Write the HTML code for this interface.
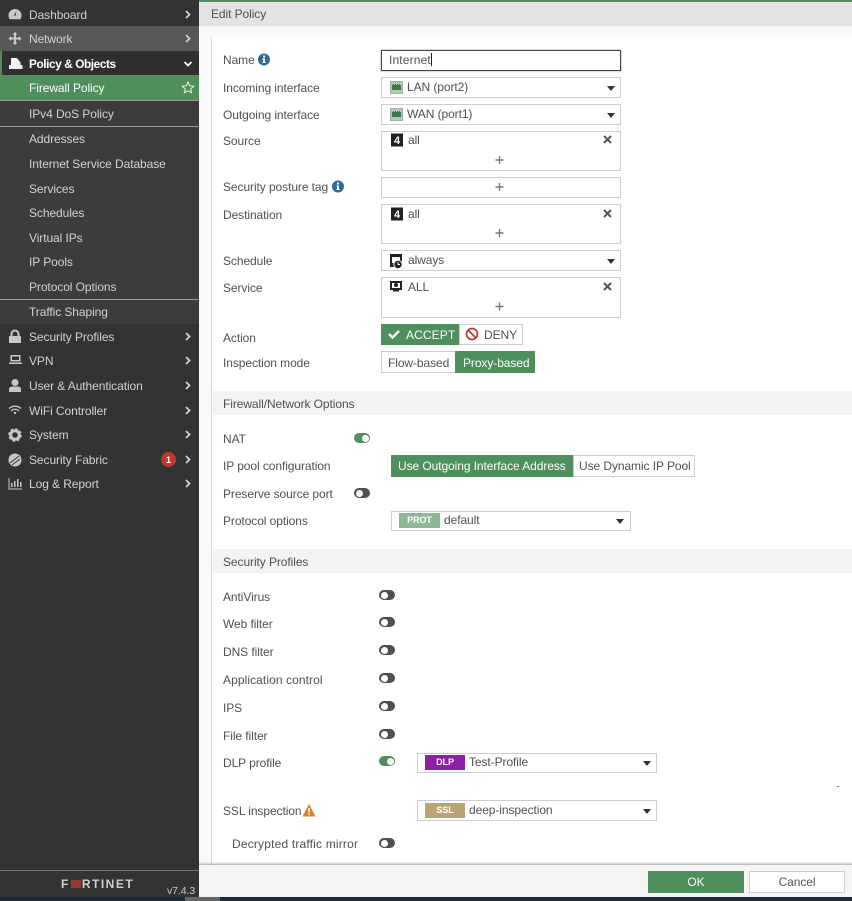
<!DOCTYPE html>
<html><head><meta charset="utf-8"><style>
html,body{margin:0;padding:0;width:852px;height:901px;overflow:hidden;background:#fff;font-family:"Liberation Sans",sans-serif;font-size:12px;letter-spacing:-.08px;color:#505050}
.a,.t,.b,svg{position:absolute}
svg{z-index:2}
.t{line-height:16px;white-space:nowrap;z-index:3}
.s{color:#d2d2d2;left:29px}
.l{left:223px;color:#505050}
.b{box-sizing:border-box;border:1px solid #cdcdcd;background:#fff}
.sec{position:absolute;left:212px;width:640px;height:24px;background:#f3f3f3}
.tg{position:absolute;width:16px;height:10px;border-radius:5px;background:#505050}
.tg:after{content:"";position:absolute;left:1.500px;top:1.500px;width:7px;height:7px;background:#fff;border-radius:50%}
.tg.on{background:#4e8f5b}.tg.on:after{left:7.500px}
.ar{position:absolute;width:0;height:0;border-left:4.500px solid transparent;border-right:4.500px solid transparent;border-top:5px solid #333;z-index:3}
.chip{position:absolute;width:40px;height:15px;color:#fff;font-size:9px;font-weight:bold;text-align:center;line-height:15px;z-index:3}
</style></head><body>
<div class="a" style="left:0;top:0;width:199px;height:901px;background:#333"></div>
<div class="a" style="left:0;top:26px;width:199px;height:25px;background:#575757"></div>
<div class="a" style="left:0;top:51px;width:2px;height:24px;background:#4e8f5b"></div>
<div class="a" style="left:2px;top:51px;width:197px;height:24px;background:#2f2f2f"></div>
<div class="a" style="left:0;top:75px;width:199px;height:25px;background:#4e8f5b"></div>
<div class="a" style="left:0;top:100px;width:199px;height:224px;background:#3c3c3c"></div>
<div class="a" style="left:0;top:100px;width:199px;height:1px;background:#9a9a9a"></div>
<div class="a" style="left:0;top:126px;width:199px;height:1px;background:#9a9a9a"></div>
<div class="a" style="left:0;top:299px;width:199px;height:1px;background:#9a9a9a"></div>
<div class="a" style="left:0;top:870px;width:199px;height:1px;background:#777"></div>
<div class="t s" style="top:7px">Dashboard</div>
<div class="t s" style="top:31px">Network</div>
<div class="t s" style="top:56px;color:#fff;font-weight:bold;font-size:11.800px;letter-spacing:-.4px">Policy &amp; Objects</div>
<div class="t s" style="top:80px;color:#fff">Firewall Policy</div>
<div class="t s" style="top:106px">IPv4 DoS Policy</div>
<div class="t s" style="top:131px">Addresses</div>
<div class="t s" style="top:156px">Internet Service Database</div>
<div class="t s" style="top:181px">Services</div>
<div class="t s" style="top:205px">Schedules</div>
<div class="t s" style="top:230px">Virtual IPs</div>
<div class="t s" style="top:254px">IP Pools</div>
<div class="t s" style="top:279px">Protocol Options</div>
<div class="t s" style="top:304px">Traffic Shaping</div>
<div class="t s" style="top:329px">Security Profiles</div>
<div class="t s" style="top:353px">VPN</div>
<div class="t s" style="top:378px">User &amp; Authentication</div>
<div class="t s" style="top:403px">WiFi Controller</div>
<div class="t s" style="top:427px">System</div>
<div class="t s" style="top:452px">Security Fabric</div>
<div class="t s" style="top:476px">Log &amp; Report</div>
<svg style="left:0;top:0" width="199" height="500" fill="#c8c8c8">
<g fill="none" stroke="#d0d0d0" stroke-width="1.800">
<path d="M186 11l3.500 3.500-3.500 3.500M186 35l3.500 3.500-3.500 3.500M186 333l3.500 3.500-3.500 3.500M186 357l3.500 3.500-3.500 3.500M186 382l3.500 3.500-3.500 3.500M186 407l3.500 3.500-3.500 3.500M186 431l3.500 3.500-3.500 3.500M186 456l3.500 3.500-3.500 3.500M186 480l3.500 3.500-3.500 3.500"/>
<path d="M184.500 62l3.500 3.500 3.500-3.500" stroke="#fff"/>
</g>
<path d="M188 82l1.700 3.800 4.100.4-3.100 2.700.9 4-3.600-2.100-3.600 2.100.9-4-3.100-2.700 4.100-.4z" fill="none" stroke="#e8f3ea" stroke-width="1"/>
<path d="M15 9a6.500 6.500 0 0 0-6.500 6.500c0 1.500.5 2.800 1.300 3.700h10.400c.8-.9 1.300-2.200 1.300-3.700A6.500 6.500 0 0 0 15 9z"/><path d="M16.500 11l-1 5-1.500-.5z" fill="#333"/>
<path d="M15 32l2.500 2.500h-1.500v3h3V36l2.500 2.500-2.500 2.500v-1.500h-3v3h1.500L15 45l-2.500-2.500H14v-3h-3V41l-2.500-2.500L11 36v1.500h3v-3h-1.500z"/>
<path d="M11 58h6l3.500 4.500V65H11zM9 65h13.500v4H9z" fill="#f2f2f2"/>
<path d="M10.500 336v-2a4.500 4.500 0 0 1 9 0v2h1.500v7H9v-7zM12.500 336h5v-2a2.500 2.500 0 0 0-5 0z"/>
<path d="M10.500 355h10v6.500h-10zM12 356.500v3.500h7v-3.500zM9 362.500h13v1.500H9z"/>
<circle cx="15" cy="382.500" r="3.500"/><path d="M9 392v-2.500q0-3 3-3h6q3 0 3 3V392z"/>
<path d="M9 408.500a9 9 0 0 1 12 0M11 411a5.500 5.500 0 0 1 8 0" fill="none" stroke="#c8c8c8" stroke-width="1.300"/><circle cx="15" cy="413" r="1.200"/>
<circle cx="15" cy="435" r="4.300" fill="none" stroke="#c8c8c8" stroke-width="3"/><circle cx="15" cy="435" r="5.600" fill="none" stroke="#c8c8c8" stroke-width="2.400" stroke-dasharray="2.400 2"/>
<circle cx="15" cy="460" r="6.500"/><path d="M10 463l9-7M12 465l8-6" stroke="#333" fill="none"/>
<path d="M9 478v11h13" fill="none" stroke="#c8c8c8" stroke-width="1"/><path d="M11 483h1.500v4H11zM14 481h1.500v6H14zM17 479h1.500v8H17zM20 482h1.500v5H20z"/>
<circle cx="168.500" cy="459.500" r="7.500" fill="#c0392b"/>
</svg>
<div class="t" style="left:165px;top:452px;width:7px;text-align:center;color:#fff;font-size:9px;font-weight:bold">1</div>
<div class="t" style="left:61px;top:876px;color:#cfcfcf;font-size:12px;font-weight:bold;letter-spacing:1.500px">F<span style="display:inline-block;width:10px;height:8px;background:#9b3a32;margin:0 1px"></span>RTINET</div>
<div class="t" style="left:167px;top:883px;color:#ccc;font-size:10.500px">v7.4.3</div>

<div class="a" style="left:199px;top:0;width:653px;height:2px;background:#4e8f5b"></div>
<div class="a" style="left:199px;top:2px;width:653px;height:24px;background:#e3e3e3"></div>
<div class="a" style="left:199px;top:26px;width:653px;height:839px;background:#f9f9f9"></div>
<div class="a" style="left:211px;top:37px;width:641px;height:828px;background:#fff;border-left:1px solid #dcdcdc;box-sizing:border-box"></div>
<div class="t" style="left:211px;top:6px">Edit Policy</div>

<div class="t l" style="top:52px">Name</div>
<div class="t l" style="top:80px">Incoming interface</div>
<div class="t l" style="top:107px">Outgoing interface</div>
<div class="t l" style="top:133px">Source</div>
<div class="t l" style="top:179px">Security posture tag</div>
<div class="t l" style="top:207px">Destination</div>
<div class="t l" style="top:253px">Schedule</div>
<div class="t l" style="top:280px">Service</div>
<div class="t l" style="top:330px">Action</div>
<div class="t l" style="top:355px">Inspection mode</div>

<div class="b" style="left:381px;top:50px;width:240px;height:21px;border-color:#444;box-shadow:0 0 2px #999"></div>
<div class="t" style="left:389px;top:52px;letter-spacing:.15px">Internet</div>
<div class="a" style="left:431px;top:53px;width:1px;height:13px;background:#222;z-index:3"></div>
<div class="b" style="left:381px;top:77px;width:240px;height:21px"></div>
<div class="b" style="left:381px;top:104px;width:240px;height:21px"></div>
<div class="b" style="left:381px;top:131px;width:240px;height:40px"></div>
<div class="b" style="left:381px;top:177px;width:240px;height:21px"></div>
<div class="b" style="left:381px;top:204px;width:240px;height:40px"></div>
<div class="b" style="left:381px;top:250px;width:240px;height:21px"></div>
<div class="b" style="left:381px;top:277px;width:240px;height:41px"></div>
<div class="t" style="left:407px;top:79px">LAN (port2)</div>
<div class="t" style="left:407px;top:106px">WAN (port1)</div>
<div class="t" style="left:408px;top:132px">all</div>
<div class="t" style="left:408px;top:206px">all</div>
<div class="t" style="left:408px;top:252px">always</div>
<div class="t" style="left:408px;top:279px">ALL</div>
<div class="ar" style="left:607px;top:86px"></div>
<div class="ar" style="left:607px;top:113px"></div>
<div class="ar" style="left:607px;top:259px"></div>
<svg style="left:200px;top:40px" width="652" height="340">
<g fill="#2f6a9e"><circle cx="64" cy="19.500" r="6"/><circle cx="138" cy="146.500" r="6"/></g>
<g fill="#fff"><path d="M63 15.500h2v2h-2zM62.500 18.500h2.500v3.500h.8v1h-3.500v-1h.7v-2.500h-.5zM137 142.500h2v2h-2zM136.500 145.500h2.500v3.500h.8v1h-3.500v-1h.7v-2.500h-.5z"/></g>
<g fill="#a8d0ae" stroke="#aaa"><rect x="190.500" y="41.500" width="12" height="12"/><rect x="190.500" y="68.500" width="12" height="12"/></g>
<g fill="#3d7a48"><path d="M192 45h1v-1h1v1h1v-1h1v1h1v-1h1v1h1v-1h1v1h1v5h-9zM192 72h1v-1h1v1h1v-1h1v1h1v-1h1v1h1v-1h1v1h1v5h-9z"/></g>
<g fill="#222"><rect x="191" y="93.500" width="12" height="13"/><rect x="191" y="167.500" width="12" height="13"/><path d="M190 214h12v13h-12zM190 241h12v9h-12z"/></g>
<g fill="#fff" font-family="Liberation Sans" font-weight="bold" font-size="11" text-anchor="middle"><text x="197" y="104">4</text><text x="197" y="178">4</text></g>
<rect x="192" y="217" width="8" height="6" fill="#fff"/><circle cx="198" cy="224.500" r="4.200" fill="#222" stroke="#fff"/><path d="M198 222v2.500h2" stroke="#fff" fill="none"/>
<rect x="192" y="243" width="8" height="5" fill="#fff"/><circle cx="196" cy="245" r="2" fill="#222"/>
<path d="M193 250.500h6" stroke="#222" stroke-width="2"/>
<g stroke="#555" stroke-width="2" fill="none">
<path d="M404 96l7 7M411 96l-7 7M404 170l7 7M411 170l-7 7M404 243l7 7M411 243l-7 7"/>
</g>
<g stroke="#777" stroke-width="1.400" fill="none">
<path d="M299.500 116v8M295.500 120h8M299.500 143v8M295.500 147h8M299.500 189v8M295.500 193h8M299.500 262.500v8M295.500 266.500h8"/>
</g>
<path d="M189 294l3.500 3.500 6.500-6.500" stroke="#fff" stroke-width="2.400" fill="none"/>
<circle cx="272" cy="294" r="5.500" fill="none" stroke="#c0392b" stroke-width="1.700"/><path d="M268 290l8 8" stroke="#c0392b" stroke-width="1.700"/>
</svg>
<div class="a" style="left:381px;top:324px;width:78px;height:21px;background:#4e8f5b"></div>
<div class="b" style="left:459px;top:324px;width:64px;height:21px"></div>
<div class="t" style="left:406px;top:327px;color:#fff;letter-spacing:.1px">ACCEPT</div>
<div class="t" style="left:484px;top:327px">DENY</div>
<div class="b" style="left:381px;top:351px;width:76px;height:22px"></div>
<div class="a" style="left:455px;top:351px;width:80px;height:22px;background:#4e8f5b"></div>
<div class="t" style="left:388px;top:355px">Flow-based</div>
<div class="t" style="left:463px;top:355px;color:#fff">Proxy-based</div>

<div class="sec" style="top:391px"></div>
<div class="t l" style="top:396px">Firewall/Network Options</div>
<div class="t l" style="top:431px">NAT</div>
<div class="t l" style="top:458px">IP pool configuration</div>
<div class="t l" style="top:486px">Preserve source port</div>
<div class="t l" style="top:513px">Protocol options</div>
<div class="tg on" style="left:354px;top:433px"></div>
<div class="tg" style="left:354px;top:488px"></div>
<div class="a" style="left:391px;top:455px;width:182px;height:22px;background:#4e8f5b"></div>
<div class="b" style="left:573px;top:455px;width:122px;height:22px"></div>
<div class="t" style="left:398px;top:458px;color:#fff">Use Outgoing Interface Address</div>
<div class="t" style="left:579px;top:458px">Use Dynamic IP Pool</div>
<div class="b" style="left:391px;top:511px;width:240px;height:20px"></div>
<div class="chip" style="left:399px;top:513px;width:41px;background:#8db894">PROT</div>
<div class="t" style="left:444px;top:512px">default</div>
<div class="ar" style="left:616px;top:519px"></div>

<div class="sec" style="top:549px"></div>
<div class="t l" style="top:554px">Security Profiles</div>
<div class="t l" style="top:589px">AntiVirus</div>
<div class="t l" style="top:616px">Web filter</div>
<div class="t l" style="top:644px">DNS filter</div>
<div class="t l" style="top:672px;letter-spacing:.08px">Application control</div>
<div class="t l" style="top:700px">IPS</div>
<div class="t l" style="top:728px">File filter</div>
<div class="t l" style="top:755px">DLP profile</div>
<div class="t l" style="top:803px">SSL inspection</div>
<div class="t l" style="left:232px;top:836px;letter-spacing:.18px">Decrypted traffic mirror</div>
<div class="tg" style="left:379px;top:590px"></div>
<div class="tg" style="left:379px;top:617px"></div>
<div class="tg" style="left:379px;top:645px"></div>
<div class="tg" style="left:379px;top:673px"></div>
<div class="tg" style="left:379px;top:701px"></div>
<div class="tg" style="left:379px;top:729px"></div>
<div class="tg on" style="left:379px;top:756px"></div>
<div class="tg" style="left:379px;top:838px"></div>
<div class="b" style="left:417px;top:753px;width:240px;height:20px"></div>
<div class="chip" style="left:425px;top:755px;background:#8f1fa8">DLP</div>
<div class="t" style="left:469px;top:754px">Test-Profile</div>
<div class="ar" style="left:643px;top:761px"></div>
<div class="a" style="left:837px;top:786px;width:2px;height:1px;background:#777"></div>
<div class="b" style="left:417px;top:800px;width:240px;height:21px"></div>
<div class="chip" style="left:425px;top:803px;background:#bda374">SSL</div>
<div class="t" style="left:469px;top:802px">deep-inspection</div>
<div class="ar" style="left:643px;top:809px"></div>
<svg style="left:302px;top:804px" width="14" height="13"><path d="M7 0l6.500 12.500H.5z" fill="#d9822b"/><path d="M6.300 4h1.400v4.500H6.300zM6.300 9.500h1.400V11H6.300z" fill="#fff"/></svg>

<div class="a" style="left:199px;top:862px;width:653px;height:3px;background:linear-gradient(rgba(180,180,180,0),rgba(170,170,170,.9))"></div>
<div class="a" style="left:199px;top:865px;width:653px;height:32px;background:#f5f5f5"></div>
<div class="a" style="left:648px;top:871px;width:96px;height:22px;background:#4e8f5b"></div>
<div class="b" style="left:749px;top:871px;width:96px;height:22px"></div>
<div class="t" style="left:648px;top:874px;width:96px;text-align:center;color:#fff">OK</div>
<div class="t" style="left:749px;top:874px;width:96px;text-align:center">Cancel</div>
<div class="a" style="left:0;top:897px;width:852px;height:4px;background:#1b2a33"></div>
<div class="a" style="left:185px;top:897px;width:35px;height:4px;background:#666"></div>
</body></html>
